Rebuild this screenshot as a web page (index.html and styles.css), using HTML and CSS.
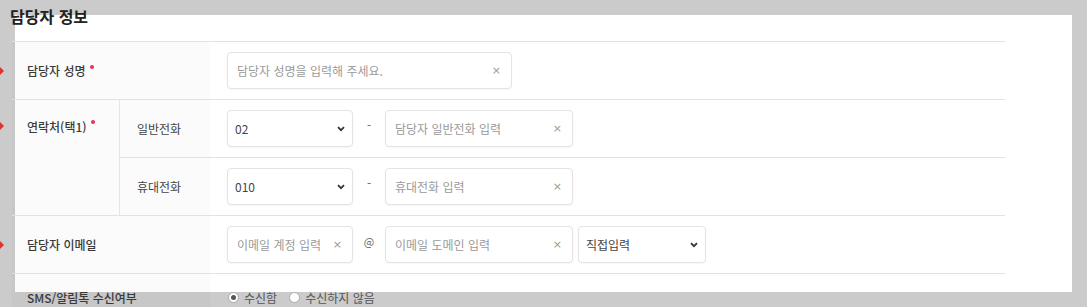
FILE: index.html
```html
<!DOCTYPE html>
<html lang="ko">

<head>
    <meta charset="UTF-8">
    <meta name="viewport" content="width=device-width, initial-scale=1.0">
    <title>담당자 정보</title>
    <link rel="stylesheet" href="styles.css">
</head>

<body>
    <div class="page">
        <h2 class="title">담당자 정보</h2>

        <div class="form">
            <!-- 담당자 성명 -->
            <div class="label span2 marked required">담당자 성명</div>
            <div class="value">
                <div class="field w-name">
                    <input type="text" placeholder="담당자 성명을 입력해 주세요.">
                    <button class="clear">×</button>
                </div>
            </div>

            <!-- 연락처 -->
            <div class="label top rows2 marked required">연락처(택1)</div>
            <div class="sublabel">일반전화</div>
            <div class="value">
                <div class="select w-sm">
                    <select>
                        <option>02</option>
                        <option>031</option>
                        <option>032</option>
                    </select>
                    <svg class="chev" width="8" height="6" viewBox="0 0 8 6"><path d="M1 1.2 4 4.2 7 1.2" fill="none" stroke="#333" stroke-width="1.8"/></svg>
                </div>
                <span class="sep">-</span>
                <div class="field w-md">
                    <input type="text" placeholder="담당자 일반전화 입력">
                    <button class="clear">×</button>
                </div>
            </div>
            <div class="sublabel">휴대전화</div>
            <div class="value">
                <div class="select w-sm">
                    <select>
                        <option>010</option>
                        <option>011</option>
                        <option>016</option>
                    </select>
                    <svg class="chev" width="8" height="6" viewBox="0 0 8 6"><path d="M1 1.2 4 4.2 7 1.2" fill="none" stroke="#333" stroke-width="1.8"/></svg>
                </div>
                <span class="sep">-</span>
                <div class="field w-md">
                    <input type="text" placeholder="휴대전화 입력">
                    <button class="clear">×</button>
                </div>
            </div>

            <!-- 이메일 -->
            <div class="label span2 marked">담당자 이메일</div>
            <div class="value">
                <div class="field w-sm">
                    <input type="text" placeholder="이메일 계정 입력">
                    <button class="clear">×</button>
                </div>
                <span class="sep at">@</span>
                <div class="field w-md">
                    <input type="text" placeholder="이메일 도메인 입력">
                    <button class="clear">×</button>
                </div>
                <div class="select w-dom">
                    <select>
                        <option>직접입력</option>
                        <option>naver.com</option>
                        <option>gmail.com</option>
                    </select>
                    <svg class="chev" width="8" height="6" viewBox="0 0 8 6"><path d="M1 1.2 4 4.2 7 1.2" fill="none" stroke="#333" stroke-width="1.8"/></svg>
                </div>
            </div>

            <!-- SMS -->
            <div class="label span2 last">SMS/알림톡 수신여부</div>
            <div class="value last">
                <label class="radio"><input type="radio" name="sms" checked><span class="dot"></span>수신함</label>
                <label class="radio"><input type="radio" name="sms"><span class="dot"></span>수신하지 않음</label>
            </div>
        </div>
    </div>
</body>

</html>
```

FILE: styles.css
```css
body {
    margin: 0;
    background-color: #cbcbcb;
    font-family: "Noto Sans CJK KR", "Noto Sans", sans-serif;
    color: #333;
    overflow: hidden;
}

.page {
    position: relative;
    padding-top: 5px;
}

/* white sheet behind the form */
.page::before {
    content: "";
    position: absolute;
    left: 15px;
    top: 15px;
    width: 1057px;
    height: 277px;
    background: #ffffff;
}

.title {
    position: relative;
    margin: 0 0 14px 10px;
    font-size: 16px;
    line-height: 22px;
    font-weight: 700;
    color: #222;
}

.form {
    position: relative;
    margin-left: 12px;
    width: 993px;
    display: grid;
    grid-template-columns: 108px 90px 1fr;
    border-top: 1px solid #e2e2e2;
}

.label,
.sublabel,
.value {
    border-bottom: 1px solid #e2e2e2;
    min-height: 58px;
    box-sizing: border-box;
    display: flex;
    align-items: center;
}

.label {
    position: relative;
    padding-left: 15px;
    font-size: 12px;
    font-weight: 500;
    color: #3a3a3a;
    background: rgba(0, 0, 0, 0.015);
}

.label.span2 {
    grid-column: span 2;
}

.label.rows2 {
    grid-row: span 2;
    border-right: 1px solid #e6e6e6;
}

.label.top {
    align-items: flex-start;
    padding-top: 18px;
}

.label.marked::before {
    content: "";
    position: absolute;
    left: -12px;
    top: 50%;
    margin-top: -4px;
    border-left: 4px solid #d9372c;
    border-top: 4px solid transparent;
    border-bottom: 4px solid transparent;
}

.label.top.marked::before {
    top: 26px;
}

.label.required::after {
    content: "";
    display: inline-block;
    width: 4px;
    height: 4px;
    border-radius: 50%;
    background: #e8305a;
    margin-left: 4px;
    align-self: flex-start;
    margin-top: 23px;
}

.label.top.required::after {
    margin-top: 2px;
}

.sublabel {
    padding-left: 17px;
    font-size: 12px;
    color: #444;
    background: rgba(0, 0, 0, 0.015);
}

.value {
    padding-left: 17px;
}

.label.last,
.value.last {
    min-height: 44px;
    border-bottom: none;
    align-items: flex-start;
    padding-top: 15px;
}

.field,
.select {
    height: 37px;
    box-sizing: border-box;
    border: 1px solid #e4e4e4;
    border-radius: 4px;
    background: #fff;
    box-shadow: 0 1px 2px rgba(0, 0, 0, 0.04);
    display: flex;
    align-items: center;
}

.field input {
    flex: 1;
    min-width: 0;
    border: none;
    outline: none;
    background: transparent;
    padding: 0 0 0 9px;
    font-family: inherit;
    font-size: 12px;
    color: #333;
}

.field input::placeholder {
    color: #9a9a9a;
}

.clear {
    border: none;
    background: none;
    padding: 0 10px 0 4px;
    font-family: "DejaVu Sans", sans-serif;
    font-size: 11px;
    color: #9a9a9a;
    cursor: pointer;
}

.select select {
    flex: 1;
    appearance: none;
    border: none;
    outline: none;
    background: transparent;
    padding: 0 0 0 7px;
    font-family: inherit;
    font-size: 12px;
    color: #444;
}

.chev {
    margin-right: 7px;
}

.w-name { width: 285px; }
.w-sm { width: 126px; }
.w-md { width: 188px; }
.w-dom { width: 128px; margin-left: 5px; }

.sep {
    width: 32px;
    text-align: center;
    font-size: 12px;
    color: #666;
    margin-top: -8px;
}

.sep.at {
    font-size: 11px;
}

.radio {
    display: flex;
    align-items: center;
    font-size: 12px;
    color: #555;
    margin-right: 11px;
    margin-left: 1px;
}

.radio input {
    display: none;
}

.radio .dot {
    width: 11px;
    height: 11px;
    box-sizing: border-box;
    border: 1px solid #aaa;
    border-radius: 50%;
    margin-right: 5px;
    background: #fff;
    position: relative;
}

.radio input:checked + .dot::after {
    content: "";
    position: absolute;
    left: 2px;
    top: 2px;
    width: 5px;
    height: 5px;
    border-radius: 50%;
    background: #555;
}
```
